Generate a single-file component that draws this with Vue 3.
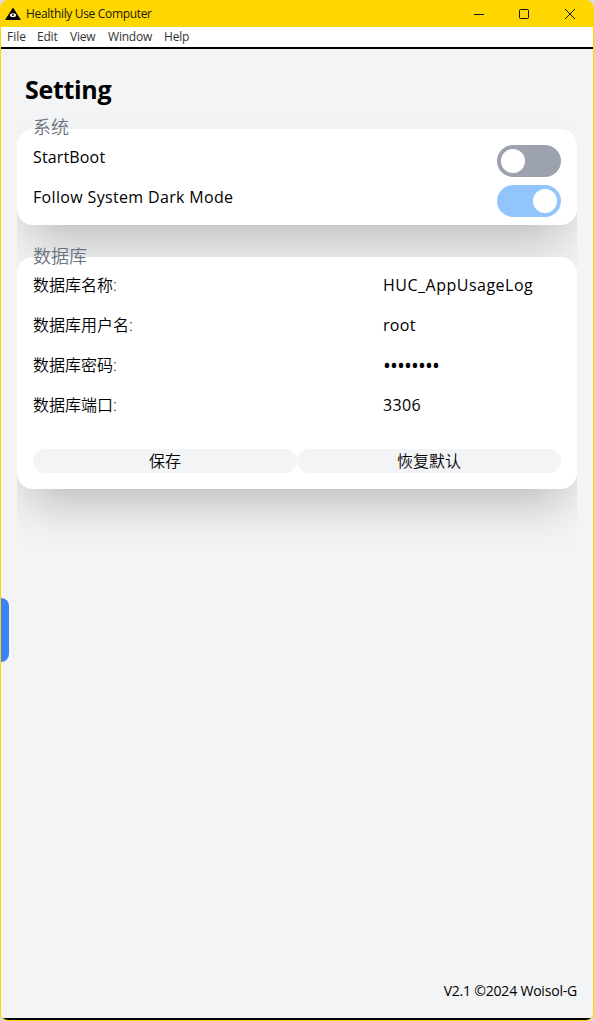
<script setup>
import { ref } from 'vue'

const menus = [
  { name: 'File', cls: 'm-file' },
  { name: 'Edit', cls: 'm-edit' },
  { name: 'View', cls: 'm-view' },
  { name: 'Window', cls: 'm-window' },
  { name: 'Help', cls: 'm-help' },
]
const switches = ref([
  { label: 'StartBoot', on: false, cls: 't-boot' },
  { label: 'Follow System Dark Mode', on: true, cls: 't-dark' },
])
const fields = [
  { label: '数据库名称:', value: 'HUC_AppUsageLog', cls: 'v-name' },
  { label: '数据库用户名:', value: 'root', cls: 'v-user' },
  { label: '数据库密码:', value: '••••••••', cls: 'v-pass' },
  { label: '数据库端口:', value: '3306', cls: 'v-port' },
]
</script>

<template>
  <div class="window">
    <header class="titlebar">
      <svg class="logo" width="16" height="14" viewBox="0 0 16 14">
        <path d="M8 0.5L16 13H0Z" fill="#050505" />
        <ellipse cx="8" cy="8.2" rx="3" ry="1.9" fill="#fff" />
        <circle cx="8" cy="8" r="1" fill="#111" />
      </svg>
      <span class="app-name">Healthily Use Computer</span>
      <svg class="controls" width="104" height="12" viewBox="0 0 104 12" fill="none" stroke="#111" stroke-width="1">
        <path d="M0 6.5H10" />
        <rect x="45.5" y="1.5" width="9" height="9" rx="1" />
        <path d="M91 1L101 11M101 1L91 11" />
      </svg>
    </header>
    <nav class="menubar">
      <span v-for="m in menus" :key="m.name" :class="m.cls">{{ m.name }}</span>
    </nav>
    <main class="page">
      <h1><span>Setting</span></h1>
      <div class="content">
        <section>
          <h2>系统</h2>
          <div class="card system">
            <div v-for="s in switches" :key="s.label" class="switch-row">
              <span class="switch-label" :class="s.cls">{{ s.label }}</span>
              <button class="switch" :class="{ on: s.on }" @click="s.on = !s.on"><i></i></button>
            </div>
          </div>
        </section>
        <section class="second">
          <h2>数据库</h2>
          <div class="card database">
            <div v-for="f in fields" :key="f.label" class="field">
              <span class="field-label">{{ f.label }}</span>
              <span class="value" :class="f.cls">{{ f.value }}</span>
            </div>
            <div class="actions">
              <button>保存</button>
              <button>恢复默认</button>
            </div>
          </div>
        </section>
      </div>
      <footer><span>V2.1 ©2024 Woisol-G</span></footer>
      <div class="drawer-handle"></div>
    </main>
  </div>
</template>

<style>
body { background: #dcdde0; }
</style>

<style scoped>
* { box-sizing: border-box; }
.window {
  height: 1021px;
  display: flex;
  flex-direction: column;
  border: 1px solid #ffd700;
  border-top: 0;
  border-radius: 8px;
  overflow: hidden;
  background: #f3f4f6;
  color: #000;
  font-family: "Open Sans", "Noto Sans CJK SC", sans-serif;
  white-space: nowrap;
}
.titlebar {
  flex: none;
  height: 27px;
  display: flex;
  align-items: center;
  background: #ffd700;
  padding-left: 4px;
}
.app-name { margin-left: 5px; font-size: 12px; letter-spacing: -0.33px; color: #1c1800; }
.controls { margin-left: auto; margin-right: 15px; }
.menubar {
  flex: none;
  height: 22px;
  display: flex;
  background: #fff;
  border-bottom: 2px solid #000;
  padding-left: 6px;
  font-size: 12px;
  line-height: 20px;
  color: #333;
}
.m-file { width: 30px; }
.m-edit { width: 33px; letter-spacing: -0.2px; }
.m-view { width: 38px; letter-spacing: -0.2px; }
.m-window { width: 56px; letter-spacing: -0.2px; }
.m-help { letter-spacing: -0.2px; }
.page {
  position: relative;
  flex: 1;
  display: flex;
  flex-direction: column;
  border-bottom: 2px solid #000;
}
h1 {
  margin: 24px 0 0 24px;
  font-size: 25px;
  line-height: 32px;
  font-weight: 700;
  letter-spacing: -0.3px;
}
.content {
  margin: 0 16px;
  padding-top: 8px;
  flex: 1;
  overflow: hidden;
}
h2 {
  position: relative;
  z-index: 1;
  margin: 0 0 -12px 16px;
  font-size: 18px;
  line-height: 28px;
  font-weight: 350;
  color: #6b7280;
}
.second { margin-top: 17px; }
.second h2 { margin-bottom: -13px; }
.card {
  background: #fff;
  border-radius: 16px;
  padding: 16px;
  box-shadow: 0 25px 50px -12px rgba(0, 0, 0, 0.25);
  display: flex;
  flex-direction: column;
  font-size: 16px;
  line-height: 24px;
}
.system { gap: 8px; padding-bottom: 8px; }
.database { gap: 16px; }
.switch-row { display: flex; justify-content: space-between; height: 32px; }
.t-boot { letter-spacing: 0.15px; }
.t-dark { letter-spacing: 0.34px; }
.switch {
  width: 64px;
  height: 32px;
  border: 0;
  border-radius: 16px;
  padding: 4px;
  background: #9ca3af;
  display: flex;
}
.switch.on { background: #93c5fd; justify-content: flex-end; }
.switch i { width: 24px; height: 24px; border-radius: 50%; background: #fff; }
.field { display: flex; height: 24px; }
.field-label { width: 350px; font-weight: 350; }
.v-name { letter-spacing: 0.5px; }
.v-user { letter-spacing: 0.3px; }
.v-pass { font-size: 21px; letter-spacing: -0.9px; }
.v-port { letter-spacing: 0.35px; }
.actions { display: flex; margin-top: 16px; }
.actions button {
  flex: 1;
  height: 24px;
  padding: 0 0 2px;
  border: 0;
  border-radius: 12px;
  background: #f3f4f6;
  color: #000;
  font: 350 16px/22px "Noto Sans CJK SC", sans-serif;
}
footer {
  padding: 0 16px 17px 0;
  text-align: right;
  font-size: 14px;
  line-height: 20px;
  letter-spacing: -0.2px;
}
.drawer-handle {
  position: absolute;
  left: 0;
  top: 549px;
  width: 8px;
  height: 64px;
  background: #3b82f6;
  border-radius: 0 8px 8px 0;
}
</style>
